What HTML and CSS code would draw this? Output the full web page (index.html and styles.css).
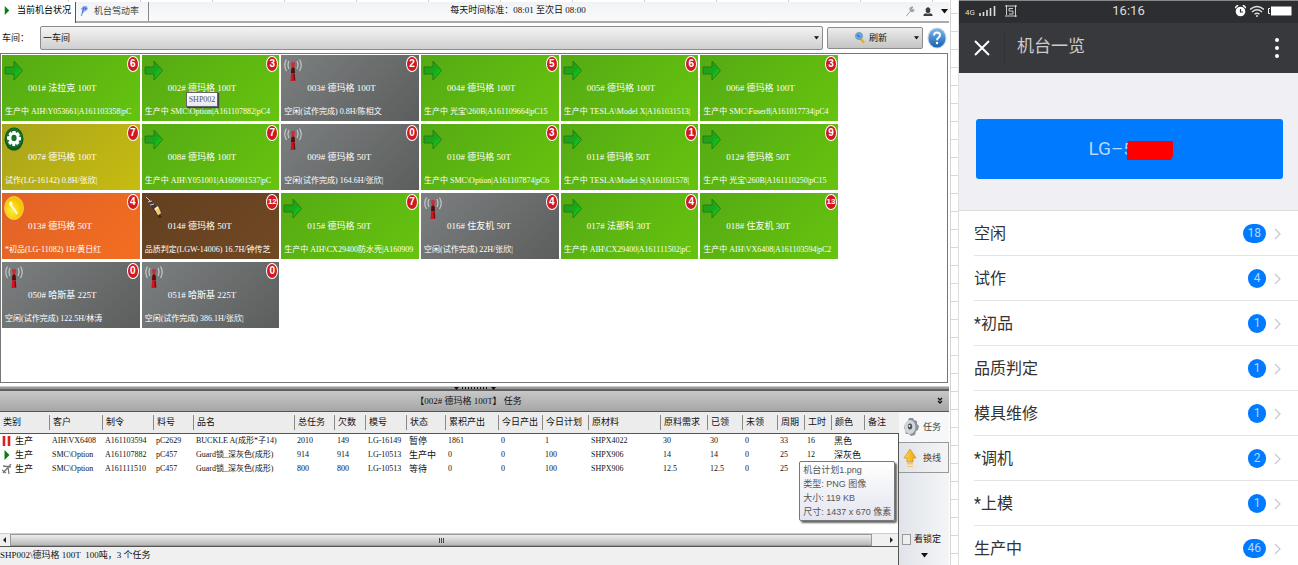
FILE: index.html
```html
<!DOCTYPE html>
<html lang="zh-CN">
<head>
<meta charset="utf-8">
<title>机台状况</title>
<link rel="stylesheet" href="styles.css">
</head>
<body>
<svg class="defs" aria-hidden="true">
  <defs>
    <linearGradient id="gArrow" x1="0" y1="0" x2="1" y2="1"><stop offset="0" stop-color="#2a9a1c"/><stop offset=".55" stop-color="#18a81a"/><stop offset="1" stop-color="#00f01c"/></linearGradient>
    <radialGradient id="gYellow" cx=".4" cy=".6"><stop offset="0" stop-color="#ffee3c"/><stop offset="1" stop-color="#f5c400"/></radialGradient>
    <linearGradient id="gHelp" x1="0" y1="0" x2="0" y2="1"><stop offset="0" stop-color="#7db8ec"/><stop offset="1" stop-color="#1460b4"/></linearGradient>
    <linearGradient id="gUp" x1="0" y1="0" x2="1" y2="0"><stop offset="0" stop-color="#ffd94a"/><stop offset="1" stop-color="#f0a010"/></linearGradient>
    <symbol id="run" viewBox="0 0 20 24"><path d="M1 9h9V3l8.500 9.500L10 22v-6H1z" fill="url(#gArrow)" stroke="#2b7a14" stroke-width="1"/></symbol>
    <symbol id="idle" viewBox="0 0 20 24"><path d="M9 7h2l1.500 16H7.500z" fill="#d01420"/><path d="M8.500 10h3l.5 5H8z" fill="#4a1014"/><path d="M11 16l.5 6" stroke="#4a1014"/><circle cx="10" cy="6" r="2.200" fill="#c8323a"/><path d="M6 3Q4 7 6 11M3.500 1.500Q0 7 3.500 13M14 3q2 4 0 8M16.500 1.500q3.500 5.500 0 11.500" fill="none" stroke="#c4c8c8" stroke-width="1.200"/></symbol>
    <symbol id="trial" viewBox="0 0 20 24"><ellipse cx="10" cy="12" rx="9.500" ry="11.500" fill="#0a5a1c"/><ellipse cx="10" cy="11" rx="8.500" ry="10" fill="#18702c"/><path d="M8.500 4h3l.5 2 2-1 2 3-1.500 1.500L17 10v3l-2.500 1 1 2-2.500 2-1.500-1.500-.5 2.500H8.500L8 16.500 6 18l-2-2.500 1.500-2L3 12.500v-3L5.500 9 4.500 7l2-2.500L8 6z" fill="#fff"/><ellipse cx="10" cy="11" rx="2.600" ry="3.200" fill="#18702c"/></symbol>
    <symbol id="first" viewBox="0 0 20 24"><ellipse cx="10" cy="12" rx="9.500" ry="11.500" fill="url(#gYellow)" stroke="#ffe970" stroke-width=".6"/><path d="M5 7l2-2 2 3-1 1 6 8-1.500 1.500L6.500 10 5.500 10z" fill="#fffbe0"/></symbol>
    <symbol id="judge" viewBox="0 0 20 24"><path d="M6 8l9 14 3-1z" fill="#20140c" opacity=".6"/><path d="M2 2l10 13 3-3L5 4z" fill="#3a3a42"/><path d="M2 1l4 4M4 6l4-1M6 9l4-1" stroke="#c8ccd4" stroke-width="1"/><path d="M11 14l3.500-3 2.500 6-3 2.500z" fill="#f0cc78"/><path d="M10 13l3.500-3 1 1.500-3 3z" fill="#fff2c0"/></symbol>
    <symbol id="chev" viewBox="0 0 7 12"><path d="M1 1l5 5-5 5" fill="none" stroke="#c7c7cc" stroke-width="1.200"/></symbol>
    <symbol id="down" viewBox="0 0 7 5"><path d="M0 0h7L3.500 4.500z" fill="#111"/></symbol>
    <symbol id="play" viewBox="0 0 6 10"><path d="M.5 0l5 5-5 5z" fill="#0f7a14"/></symbol>
  </defs>
</svg>
<div class="page">
  <main class="desk">
    <header class="tabs">
      <button class="tab on"><svg class="i-play"><use href="#play"/></svg>当前机台状况</button>
      <button class="tab"><svg class="i-p" viewBox="0 0 8 11"><path d="M3 1h3q3 3-1 5L3 7 1.500 11H0l2-6L0 4z" fill="#8ea9ee"/><path d="M3 2.500L2 8M3.500 3h2q1 1-1 2" fill="none" stroke="#3a62d8"/></svg>机台驾动率</button>
      <p class="daytime">每天时间标准：08:01 至次日 08:00</p>
      <div class="tools">
        <svg class="i-t" viewBox="0 0 10 12"><path d="M1 11l5-6M5 4q-1-3 3-3L7 3l1 1.500 1.500-.5q0 3-3.500 2z" fill="#aaa" stroke="#999"/></svg>
        <svg class="i-t" viewBox="0 0 10 12"><path d="M5 1l2.500 2v3L6 8H4L2.500 6V3zM0 11q0-3 3-3l2 1 2-1q3 0 3 3z" fill="#3c3c44"/></svg>
        <svg class="i-d"><use href="#down"/></svg>
      </div>
    </header>
    <div class="bar">
      <label for="shop">车间：</label>
      <div class="pick"><select id="shop"><option>一车间</option></select><svg class="i-s"><use href="#down"/></svg></div>
      <button class="refresh"><svg class="i-r" viewBox="0 0 10 12"><path d="M5 6l4 5" stroke="#e0b030" stroke-width="2.500"/><ellipse cx="4" cy="4" rx="3.500" ry="3.500" fill="#5fa8e8" stroke="#8098b0"/><path d="M2 3l3 2" stroke="#1d5fb0"/></svg>刷新<svg class="i-s"><use href="#down"/></svg></button>
      <button class="help" aria-label="帮助"><svg viewBox="0 0 20 22"><ellipse cx="10" cy="11" rx="9.500" ry="10.500" fill="#c8d4e2"/><ellipse cx="10" cy="11" rx="8.500" ry="9.500" fill="url(#gHelp)"/><path d="M7 8.500q0-3 3-3t3 2.800c0 2.200-3 2.200-3 5" fill="none" stroke="#fff" stroke-width="1.900"/><circle cx="10" cy="16" r="1.200" fill="#fff"/></svg></button>
    </div>
    <section class="board">
      <div class="cards">
        <article class="card green"><svg class="st"><use href="#run"/></svg><b class="n">6</b><h3>001# 法拉克 100T</h3><p>生产中 AIH\Y053661|A161103358|pC</p></article>
        <article class="card green"><svg class="st"><use href="#run"/></svg><b class="n">3</b><h3>002# 德玛格 100T</h3><p>生产中 SMC\Option|A161107882|pC4</p><span class="tip">SHP002</span></article>
        <article class="card gray"><svg class="st"><use href="#idle"/></svg><b class="n">2</b><h3>003# 德玛格 100T</h3><p>空闲(试作完成) 0.8H/陈相文</p></article>
        <article class="card green"><svg class="st"><use href="#run"/></svg><b class="n">5</b><h3>004# 德玛格 100T</h3><p>生产中 光宝\260B|A161109664|pC15</p></article>
        <article class="card green"><svg class="st"><use href="#run"/></svg><b class="n">6</b><h3>005# 德玛格 100T</h3><p>生产中 TESLA\Model X|A161031513|</p></article>
        <article class="card green"><svg class="st"><use href="#run"/></svg><b class="n">3</b><h3>006# 德玛格 100T</h3><p>生产中 SMC\Fuser8|A161017734|pC4</p></article>
        <article class="card olive"><svg class="st"><use href="#trial"/></svg><b class="n">7</b><h3>007# 德玛格 100T</h3><p>试作(LG-16142) 0.8H/张欣|</p></article>
        <article class="card green"><svg class="st"><use href="#run"/></svg><b class="n">7</b><h3>008# 德玛格 100T</h3><p>生产中 AIH\Y051001|A160901537|pC</p></article>
        <article class="card gray"><svg class="st"><use href="#idle"/></svg><b class="n">0</b><h3>009# 德玛格 50T</h3><p>空闲(试作完成) 164.6H/张欣|</p></article>
        <article class="card green"><svg class="st"><use href="#run"/></svg><b class="n">3</b><h3>010# 德玛格 50T</h3><p>生产中 SMC\Option|A161107874|pC6</p></article>
        <article class="card green"><svg class="st"><use href="#run"/></svg><b class="n">1</b><h3>011# 德玛格 50T</h3><p>生产中 TESLA\Model S|A161031578|</p></article>
        <article class="card green"><svg class="st"><use href="#run"/></svg><b class="n">9</b><h3>012# 德玛格 50T</h3><p>生产中 光宝\260B|A161110250|pC15</p></article>
        <article class="card orange"><svg class="st"><use href="#first"/></svg><b class="n">4</b><h3>013# 德玛格 50T</h3><p>*初品(LG-11082) 1H/黄日红</p></article>
        <article class="card brown"><svg class="st"><use href="#judge"/></svg><b class="n two">12</b><h3>014# 德玛格 50T</h3><p>品质判定(LGW-14006) 16.7H/钟传芝</p></article>
        <article class="card green"><svg class="st"><use href="#run"/></svg><b class="n">7</b><h3>015# 德玛格 50T</h3><p>生产中 AIH\CX29400防水壳|A160909</p></article>
        <article class="card gray"><svg class="st"><use href="#idle"/></svg><b class="n">4</b><h3>016# 住友机 50T</h3><p>空闲(试作完成) 22H/张欣|</p></article>
        <article class="card green"><svg class="st"><use href="#run"/></svg><b class="n">4</b><h3>017# 法那科 30T</h3><p>生产中 AIH\CX29400|A161111502|pC</p></article>
        <article class="card green"><svg class="st"><use href="#run"/></svg><b class="n two">13</b><h3>018# 住友机 30T</h3><p>生产中 AIH\VX6408|A161103594|pC2</p></article>
        <article class="card gray"><svg class="st"><use href="#idle"/></svg><b class="n">0</b><h3>050# 哈斯基 225T</h3><p>空闲(试作完成) 122.5H/林涛</p></article>
        <article class="card gray"><svg class="st"><use href="#idle"/></svg><b class="n">0</b><h3>051# 哈斯基 225T</h3><p>空闲(试作完成) 386.1H/张欣|</p></article>
      </div>
    </section>
    <div class="split"><svg viewBox="0 0 42 4"><path d="M0 1h5L2.500 4zM37 1h5l-2.500 3z" fill="#111"/><path d="M8 2h26" stroke="#111" stroke-width="2" stroke-dasharray="1 2"/></svg></div>
    <div class="title"><h2>【002# 德玛格 100T】 任务</h2><svg viewBox="0 0 6 8"><path d="M1 1l2 2 2-2M1 4l2 2 2-2" fill="none" stroke="#111" stroke-width="1.300"/></svg></div>
    <section class="lower">
      <div class="grid">
        <table>
          <colgroup><col class="w49"><col class="w53"><col class="w51"><col class="w40"><col class="w101"><col class="w40"><col class="w31"><col class="w41"><col class="w39"><col class="w53"><col class="w44"><col class="w46"><col class="w72"><col class="w47"><col class="w35"><col class="w35"><col class="w27"><col class="w27"><col class="w33"><col class="w35"></colgroup>
          <thead><tr><th>类别</th><th>客户</th><th>制令</th><th>料号</th><th>品名</th><th>总任务</th><th>欠数</th><th>模号</th><th>状态</th><th>累积产出</th><th>今日产出</th><th>今日计划</th><th>原材料</th><th>原料需求</th><th>已领</th><th>未领</th><th>周期</th><th>工时</th><th>颜色</th><th>备注</th></tr></thead>
          <tbody>
            <tr><td><svg class="i-k" viewBox="0 0 10 10"><path d="M2 0v10M7 0v10" stroke="#e02020" stroke-width="2.600"/></svg>生产</td><td>AIH\VX6408</td><td>A161103594</td><td>pC2629</td><td>BUCKLE A(成形*子14)</td><td>2010</td><td>149</td><td>LG-16149</td><td>暂停</td><td>1861</td><td>0</td><td>1</td><td>SHPX4022</td><td>30</td><td>30</td><td>0</td><td>33</td><td>16</td><td>黑色</td><td></td></tr>
            <tr><td><svg class="i-k"><use href="#play"/></svg>生产</td><td>SMC\Option</td><td>A161107882</td><td>pC457</td><td>Guard锁_深灰色(成形)</td><td>914</td><td>914</td><td>LG-10513</td><td>生产中</td><td>0</td><td>0</td><td>100</td><td>SHPX906</td><td>14</td><td>14</td><td>0</td><td>25</td><td>12</td><td>深灰色</td><td></td></tr>
            <tr><td><svg class="i-k" viewBox="0 0 10 10"><path d="M1 9L9 0M1 2l8 1M6 3l1 7M0 6l4 3" fill="none" stroke="#777" stroke-width="1.300"/></svg>生产</td><td>SMC\Option</td><td>A161111510</td><td>pC457</td><td>Guard锁_深灰色(成形)</td><td>800</td><td>800</td><td>LG-10513</td><td>等待</td><td>0</td><td>0</td><td>100</td><td>SHPX906</td><td>12.5</td><td>12.5</td><td>0</td><td>25</td><td></td><td></td><td></td></tr>
          </tbody>
        </table>
        <div class="scroll"><svg class="i-a" viewBox="0 0 3 6"><path d="M3 0v6L0 3z" fill="#222"/></svg><div class="thumb"><i></i><i></i><i></i></div><svg class="i-a" viewBox="0 0 3 6"><path d="M0 0v6l3-3z" fill="#222"/></svg></div>
        <footer class="status">SHP002\德玛格 100T&nbsp; 100吨，3 个任务</footer>
        <div class="filetip">机台计划1.png<br>类型: PNG 图像<br>大小: 119 KB<br>尺寸: 1437 x 670 像素</div>
      </div>
      <aside class="side">
        <button class="s1"><svg viewBox="0 0 16 20"><path d="M6 1l4 0 1 2 3 1 0 3 2 2-1 4-2 1-1 4-4 1-2-2-3 0-1-4-1-2 1-4 2-1z" fill="#8c9098"/><ellipse cx="7" cy="10" rx="5.500" ry="7" fill="#d2d6da"/><ellipse cx="7" cy="9.500" rx="2.200" ry="3" fill="#4c525c"/><circle cx="6.500" cy="9" r="1" fill="#eee"/></svg>任务</button>
        <button class="s2"><svg viewBox="0 0 14 20"><path d="M7 1l6 9h-3v4H4v-4H1z" fill="url(#gUp)" stroke="#d89818" stroke-width=".8"/><path d="M4 15h6v1.500H4zM4 18h6v1H4z" fill="#f4c468"/></svg>换线</button>
        <label class="lock"><input type="checkbox">看锁定</label>
        <svg class="i-d"><use href="#down"/></svg>
      </aside>
    </section>
  </main>
  <div class="gutter"></div>
  <section class="phone">
    <div class="sbar">
      <div class="sl"><small>4G</small><svg class="i-sig" viewBox="0 0 18 12"><path d="M1 11V8M4.500 11V7M8 11V5M11.500 11V3M15.500 11V1" stroke="#ddd" stroke-width="1.600"/></svg><svg class="i-ss" viewBox="0 0 12 12"><path d="M0 1h12M1.500 0v10M10.500 0v12M0 11h12M4 3.500h4M4 3.500V6h4v3H4" fill="none" stroke="#ccc"/></svg></div>
      <time>16:16</time>
      <div class="sr"><svg class="i-al" viewBox="0 0 11 12"><circle cx="5.500" cy="6.500" r="4.800" fill="#fff"/><path d="M5.500 4v3h2.500" fill="none" stroke="#2b2c30" stroke-width="1.200"/><path d="M0 3l3-3M11 3L8 0" stroke="#fff" stroke-width="1.500"/></svg><svg class="i-wf" viewBox="0 0 14 12"><path d="M0 4.500q7-6 14 0M2 7q5-4.500 10 0M4.500 9.200q2.500-2 5 0" fill="none" stroke="#ddd" stroke-width="1.400"/><circle cx="7" cy="11" r="1" fill="#ddd"/></svg><svg class="i-bt" viewBox="0 0 24 10"><path d="M3 .5h20.500v9H3z" fill="#fff"/><path d="M2 2.500H.5v5H2" fill="none" stroke="#fff"/></svg></div>
    </div>
    <nav>
      <button class="x" aria-label="关闭"><svg viewBox="0 0 16 16"><path d="M1 1l14 14M15 1L1 15" stroke="#fff" stroke-width="2"/></svg></button>
      <h1>机台一览</h1>
      <button class="more" aria-label="更多"><svg viewBox="0 0 4 20"><circle cx="2" cy="2" r="2" fill="#fff"/><circle cx="2" cy="10" r="2" fill="#fff"/><circle cx="2" cy="18" r="2" fill="#fff"/></svg></button>
    </nav>
    <div class="hero"><button>LG–<span class="code">5<svg viewBox="0 0 47 20"><path d="M2 0h45v15l-2 4H1v-9z" fill="#f00"/></svg></span></button></div>
    <ul>
      <li><a href="#"><span>空闲</span><b>18</b><svg><use href="#chev"/></svg></a></li>
      <li><a href="#"><span>试作</span><b>4</b><svg><use href="#chev"/></svg></a></li>
      <li><a href="#"><span>*初品</span><b>1</b><svg><use href="#chev"/></svg></a></li>
      <li><a href="#"><span>品质判定</span><b>1</b><svg><use href="#chev"/></svg></a></li>
      <li><a href="#"><span>模具维修</span><b>1</b><svg><use href="#chev"/></svg></a></li>
      <li><a href="#"><span>*调机</span><b>2</b><svg><use href="#chev"/></svg></a></li>
      <li><a href="#"><span>*上模</span><b>1</b><svg><use href="#chev"/></svg></a></li>
      <li><a href="#"><span>生产中</span><b>46</b><svg><use href="#chev"/></svg></a></li>
    </ul>
  </section>
</div>
</body>
</html>
```
FILE: styles.css
```css
* { box-sizing: border-box; margin: 0; padding: 0; }
body { font: 9px/14px "Liberation Serif", "Noto Sans CJK SC", sans-serif; color: #111; background: #fff; }
button, select, input { font: inherit; color: inherit; border: 0; background: none; appearance: none; }
svg { display: block; flex: none; }
ul { list-style: none; }
h1, h2, h3 { font: inherit; }
.defs { position: absolute; width: 0; height: 0; }
.page { display: grid; grid-template-columns: 951fr 8px 339fr; min-height: 100vh; }

.desk { display: flex; flex-direction: column; min-width: 0; border-right: 1px solid #d4d4d4; padding-right: 1px; }
.tabs { display: flex; height: 23px; padding-top: 2px; border-bottom: 2px solid #a8aaac;
  background: repeating-linear-gradient(90deg, transparent 0 68px, #d4d4d4 68px 69px, transparent 69px 72px) 0 0 / 100% 2px no-repeat, linear-gradient(#f1f2f5, #fbfbfc 90%) 0 2px no-repeat; }
.tab { display: flex; align-items: center; gap: 5px; padding: 0 9px 2px 4px; color: #444; border-right: 1px solid #888; }
.tab.on { padding: 0 4px; gap: 7px; color: #000; background: #fff; border-right: 1px solid #555; margin-bottom: -2px; padding-bottom: 5px; }
.daytime { flex: 1; text-align: center; line-height: 17px; padding-right: 18px; }
.tools { display: flex; align-items: center; gap: 8px; padding-right: 1px; }
.i-play { width: 6px; height: 9px; }
.i-p { width: 9px; height: 11px; }
.i-t { width: 10px; height: 11px; }
.i-d { width: 7px; height: 5px; }
.i-s { width: 5px; height: 4px; }
.i-r { width: 10px; height: 12px; }
.bar { display: flex; align-items: center; height: 30px; gap: 4px; padding: 2px 2px 2px 2px; }
.bar label { width: 34px; }
.pick { flex: 1; display: grid; align-items: center; height: 24px; border: 1px solid #8c8c8c; border-radius: 2px; background: linear-gradient(#f4f4f4, #cfcfcf); }
.pick > * { grid-area: 1 / 1; }
.pick select { width: 100%; height: 22px; padding-left: 2px; }
.pick svg { justify-self: end; margin-right: 3px; }
.refresh { display: flex; align-items: center; gap: 4px; width: 96px; height: 22px; padding: 0 3px 0 27px; border: 1px solid #8c8c8c; border-radius: 2px; background: linear-gradient(#ececec, #c4c4c4); }
.refresh .i-s { margin-left: auto; }
.help svg { width: 20px; height: 22px; }

.board { flex: 1; border: 1px solid #777; margin-right: 1px; padding: 1px; }
.cards { display: grid; grid-template-columns: repeat(6, minmax(0, 1fr)); gap: 3px 2px; width: 88%; min-width: 836px; }
.card { position: relative; height: 66px; color: #fff; white-space: nowrap; }
.card h3 { padding: 26px 0 0 26px; }
.card p { padding: 10px 0 0 3px; font-size: 8px; }
.green { background: linear-gradient(135deg, #55aa14, #66c40e); }
.gray { background: linear-gradient(135deg, #7c7f7f, #5c5e5e); }
.olive { background: linear-gradient(135deg, #a8a41c, #c8bc10); }
.orange { background: linear-gradient(135deg, #e06228, #f46e20); }
.brown { background: linear-gradient(135deg, #644020, #704824); }
.st { position: absolute; left: 2px; top: 3px; width: 20px; height: 24px; }
.n { position: absolute; right: 1px; top: 1px; width: 12px; height: 16px; border: 1px solid #fff; border-radius: 50%; background: #d01820; color: #fff; text-align: center; font: bold 10px/14px "Liberation Sans", sans-serif; }
.two { font-size: 8px; }
.tip { position: absolute; left: 44px; top: 37px; padding: 0 2px; border: 1px solid #666; background: linear-gradient(#fff, #e6e8f2); color: #555; font-size: 8px; line-height: 13px; box-shadow: 1px 1px 1px #444; }

.split { display: flex; justify-content: center; height: 7px; margin-top: 1px; padding-top: 2px; border-bottom: 2px solid #606060; background: linear-gradient(#fff 2px, #999 3px); }
.split svg { width: 42px; height: 4px; }
.title { display: flex; align-items: center; height: 21px; padding-right: 6px; background: linear-gradient(#c8c8c8, #a6a6a6); border-bottom: 1px solid #555; }
.title h2 { flex: 1; text-align: center; }
.title svg { width: 6px; height: 8px; }
.lower { display: grid; grid-template-columns: 899fr 50fr; height: 154px; border-bottom: 1px solid #666; }
.grid { position: relative; display: flex; flex-direction: column; min-width: 0; border-right: 1px solid #555; }
table { width: 100%; table-layout: fixed; border-collapse: collapse; white-space: nowrap; }
.w27 { width: 27px; } .w31 { width: 31px; } .w33 { width: 33px; } .w35 { width: 35px; } .w39 { width: 39px; }
.w40 { width: 40px; } .w41 { width: 41px; } .w44 { width: 44px; } .w46 { width: 46px; } .w47 { width: 47px; }
.w49 { width: 49px; } .w51 { width: 51px; } .w53 { width: 53px; } .w72 { width: 72px; } .w101 { width: 101px; }
thead tr { height: 21px; border-bottom: 1px solid #555; background: #ececec; }
th { padding: 0 0 0 4px; font-weight: normal; text-align: left; background: linear-gradient(#888, #888) 0 3px / 1px 15px no-repeat; }
th:first-child { background: none; padding-left: 3px; }
td { padding: 0 0 0 3px; height: 14px; font-size: 8px; line-height: 14px; }
td:first-child, td:nth-child(9), td:nth-child(19) { font-size: 9px; }
td:first-child { padding-left: 2px; }
.i-k { display: inline-block; width: 10px; height: 10px; margin-right: 3px; vertical-align: middle; }
.scroll { display: flex; align-items: center; gap: 4px; height: 14px; margin-top: auto; padding: 0 5px 0 3px; background: #f0f0f0; border-top: 1px solid #ccc; border-bottom: 1px solid #555; }
.i-a { width: 3px; height: 6px; }
.thumb { flex: 1; display: flex; justify-content: center; align-items: center; gap: 1px; height: 12px; margin-right: 14px; border: 1px solid #999; background: linear-gradient(#eee, #b8b8b8); }
.thumb i { width: 1px; height: 5px; background: #444; }
.status { height: 18px; line-height: 17px; background: #f0f0f0; }
.filetip { position: absolute; left: 89%; top: 49px; padding: 1px 3px; white-space: nowrap; color: #555; border: 1px solid #777; border-radius: 2px; background: linear-gradient(#fff, #e4e5f0); box-shadow: 2px 2px 2px #666; font: 9px/14px "Liberation Sans", "Noto Sans CJK SC", sans-serif; }
.side { display: flex; flex-direction: column; background: linear-gradient(90deg, #e0e4ea, #f4f5f7); }
.side button { display: flex; align-items: center; gap: 4px; height: 30px; padding-left: 4px; color: #444; }
.side .s1 { background: #f6f7f8; }
.side .s2 { height: 31px; border: 1px solid #999; border-left: 0; background: linear-gradient(90deg, #e0e4e8, #f4f4f6); gap: 6px; }
.s1 svg { width: 16px; height: 20px; }
.s2 svg { width: 14px; height: 20px; }
.lock { display: flex; align-items: center; gap: 3px; margin-top: auto; padding-left: 3px; }
.lock input { width: 9px; height: 11px; border: 1px solid #999; background: #eee; }
.side .i-d { margin: 7px auto 7px 22px; }

.gutter { border-right: 1px solid #e0e0e0; background: repeating-linear-gradient(#fff 0 13px, #d8d8d8 13px 14px, #fff 14px 18px); }

.phone { display: flex; flex-direction: column; min-width: 0; font-family: Roboto, "Noto Sans CJK SC", sans-serif; background: #fff; }
.sbar { display: grid; grid-template-columns: 1fr auto 1fr; align-items: center; height: 23px; padding: 0 6px 2px; color: #ddd; background: #2d2e31; border-top: 1px solid #888; }
.sbar time { font-size: 13px; }
.sl, .sr { display: flex; align-items: center; gap: 4px; }
.sl small { font-size: 8px; line-height: 8px; padding-top: 3px; }
.sr { justify-content: flex-end; }
.i-sig { width: 18px; height: 12px; }
.i-ss { width: 12px; height: 12px; margin-left: 4px; }
.i-al { width: 11px; height: 12px; }
.i-wf { width: 14px; height: 12px; }
.i-bt { width: 24px; height: 10px; }
nav { display: flex; align-items: center; height: 50px; padding: 0 19px 0 15px; background: #38393d; color: #ccc; }
.x svg { width: 16px; height: 16px; }
nav h1 { flex: 1; font-size: 17px; line-height: 24px; margin-left: 14px; padding: 0 0 5px 12px; border-left: 1px solid #303134; }
.more svg { width: 4px; height: 20px; }
.hero { padding: 46px 15px 31px 17px; background: #efeff4; border-bottom: 1px solid #ddd; }
.hero button { display: block; width: 100%; height: 60px; border-radius: 3px; background: #007aff; color: #b4d8ff; font: 19px/60px Roboto, sans-serif; }
.code { position: relative; display: inline-block; width: 47px; text-align: left; font-size: 16px; }
.code svg { position: absolute; left: 2px; top: 21px; width: 47px; height: 20px; }
.phone li { margin-left: 15px; border-bottom: 1px solid #e4e4e6; }
.phone a { display: flex; align-items: center; gap: 8px; height: 44px; padding: 1px 17px 0 0; color: #333; text-decoration: none; font-size: 16px; line-height: 24px; }
.phone li:last-child { border: 0; }
.phone li:last-child a { height: 40px; padding-top: 5px; }
.phone a span { flex: 1; }
.phone a b { min-width: 18px; height: 19px; padding: 0 5px; border-radius: 10px; background: #007aff; color: #b4d8ff; font: 12px/19px Roboto, sans-serif; text-align: center; }
.phone a svg { width: 7px; height: 12px; }
```
